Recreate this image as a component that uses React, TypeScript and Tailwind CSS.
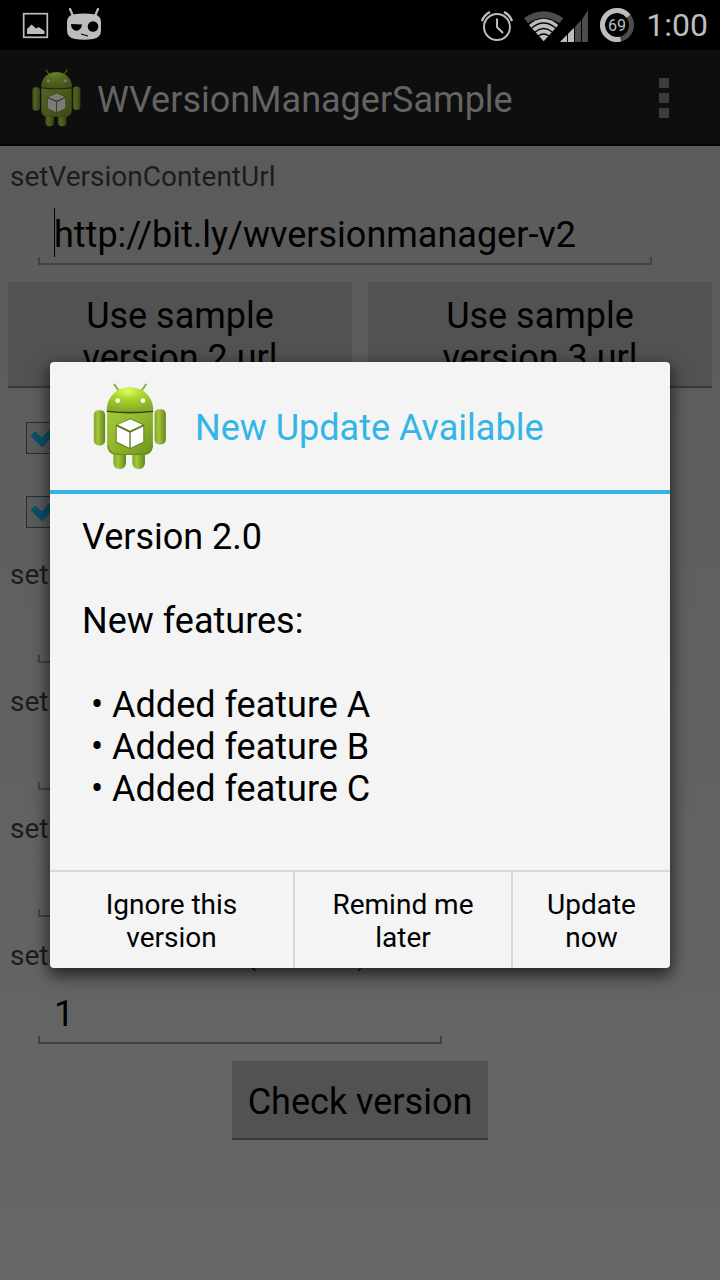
import type { ReactNode } from "react";

function Robot({ id, className }: { id: string; className: string }) {
  return (
    <svg viewBox="68 52 222 262" className={className} aria-hidden="true">
      <defs>
        <linearGradient id={`${id}-body`} x1="0" y1="0" x2="1" y2="1">
          <stop offset="0" stopColor="#a6c93a" />
          <stop offset="0.5" stopColor="#8fb52a" />
          <stop offset="1" stopColor="#6f9220" />
        </linearGradient>
        <linearGradient id={`${id}-limb`} x1="0" y1="0" x2="1" y2="0">
          <stop offset="0" stopColor="#7fa324" />
          <stop offset="0.35" stopColor="#a2c83a" />
          <stop offset="1" stopColor="#64851b" />
        </linearGradient>
        <radialGradient id={`${id}-head`} cx="0.45" cy="0.15" r="0.8">
          <stop offset="0" stopColor="#e0ff62" />
          <stop offset="0.4" stopColor="#a9d92c" />
          <stop offset="1" stopColor="#86ab28" />
        </radialGradient>
      </defs>
      <path d="M132 57l14 19M227 57l-14 19" stroke="#8db32c" strokeWidth="6" strokeLinecap="round" />
      <rect x="129" y="245" width="38" height="66" rx="17" fill={`url(#${id}-limb)`} />
      <rect x="186" y="245" width="38" height="66" rx="17" fill={`url(#${id}-limb)`} />
      <rect x="70" y="134" width="34" height="106" rx="14" fill={`url(#${id}-limb)`} />
      <rect x="253" y="131" width="34" height="106" rx="14" fill={`url(#${id}-limb)`} />
      <path d="M110 138h138v99q0 32-32 32h-74q-32 0-32-32z" fill={`url(#${id}-body)`} />
      <path d="M112 240q5 27 32 27h70q28 0 33-27" fill="none" stroke="#648418" strokeWidth="4" opacity="0.7" />
      <path d="M109 135C109 93 140 65 179 65s70 28 70 70q-70 8-140 0z" fill={`url(#${id}-head)`} />
      <path d="M109 137q70 8 140 0" fill="none" stroke="#374b0c" strokeWidth="5" />
      <circle cx="142" cy="105" r="7" fill="#fff" />
      <circle cx="218" cy="105" r="7" fill="#fff" />
      <path d="M180 158l42 20v52l-43 21-43-20v-52z" fill="#5c7a1b" />
      <path d="M180 161l37 17-38 18-37-18z" fill="#fff" />
      <path d="M139 183l38 18v46l-38-18z" fill="#fff" />
      <path d="M219 183l-38 18v46l38-18z" fill="#fff" />
    </svg>
  );
}

function StatusBar() {
  return (
    <header className="flex h-[50px] items-center justify-between bg-black pl-[22px] pr-3 text-[#bdbdbd]">
      <div className="flex items-center gap-[17px]">
        <svg viewBox="0 0 27 27" className="size-[27px]" aria-hidden="true">
          <rect x="1.7" y="1.7" width="23.6" height="23.6" fill="none" stroke="currentColor" strokeWidth="1.7" />
          <path d="M5 22V17l4.500-4.500 4.500 4 2.500-1.500 1.500 1 4.500 3V22z" fill="currentColor" />
        </svg>
        <svg viewBox="0 0 36 34" className="h-[34px] w-9" aria-hidden="true">
          <path d="M4 1l3 7M32 1l-3 7" stroke="currentColor" strokeWidth="2.200" strokeLinecap="round" />
          <path d="M7 6.500Q18 4.500 29 6.500 35 8 35 14v8q0 8-8 9-9 1.500-18 0-8-1-8-9v-8q0-6 6-7.500z" fill="currentColor" />
          <path d="M5 16l11 .5a5.500 6.500 0 01-11-.5z" fill="#000" />
          <circle cx="27" cy="18.500" r="5.300" fill="#000" />
          <path d="M15 26l7 2" stroke="#000" strokeWidth="1.300" />
        </svg>
      </div>
      <div className="flex items-center">
        <svg viewBox="0 0 34 32" className="h-8 w-[34px]" aria-hidden="true" fill="none" stroke="currentColor">
          <circle cx="17" cy="18" r="13" strokeWidth="2" />
          <path d="M17 9.500V18l6 6" strokeWidth="2" />
          <path d="M2 12Q4 6 10 3M32 12Q30 6 24 3" strokeWidth="2.500" />
        </svg>
        <svg viewBox="9 9 192 99" className="ml-[10px] h-[33px] w-16" aria-hidden="true">
          <path d="M9 36Q67-4 127 36L115 52Q67 20 21 52z" fill="#4c4c4c" />
          <path d="M24 57Q67 20 112 57L68 106z" fill="currentColor" />
          <g fill="none" stroke="#000" strokeWidth="4">
            <path d="M32 66Q68 36 104 66M42 78Q68 57 94 78M52 90Q68 78 84 90" />
          </g>
          <path d="M117 108L138 86v22zM141 83l18-18v43h-18z" fill="currentColor" />
          <path d="M162 62l18-19v65h-18zM183 40l18-27v95h-18z" fill="#4c4c4c" />
        </svg>
        <svg viewBox="0 0 34 34" className="ml-3 size-[34px]" aria-hidden="true">
          <circle cx="17" cy="17" r="14.500" fill="none" stroke="#4c4c4c" strokeWidth="5" />
          <path d="M28.500 8.200A14.500 14.500 0 1020.500 31.100" fill="none" stroke="currentColor" strokeWidth="5" />
          <text x="17" y="22.500" textAnchor="middle" fontSize="16" fontFamily="Roboto, sans-serif" fill="currentColor">69</text>
        </svg>
        <time className="ml-3 text-[32px] leading-[38px]">1:00</time>
      </div>
    </header>
  );
}

function Field({ label, value, width, cursor }: { label: string; value?: string; width: string; cursor?: boolean }) {
  return (
    <label className="block">
      <span className="block pl-[10px] text-[28px] leading-[33px] text-[#1c1c1c]">{label}</span>
      <span className={`relative ml-[38px] block max-w-full ${width}`}>
        <input
          type="text"
          defaultValue={value}
          className="block h-[72px] w-full bg-transparent px-4 pt-[21px] pb-[9px] text-[36px] leading-[42px] text-black outline-none"
        />
        <span className="-mt-2 block h-2 border-x-2 border-b-2 border-[#434343]" />
        {cursor && <span className="absolute top-[15px] left-4 h-[49px] w-px bg-black" />}
      </span>
    </label>
  );
}

function Tick({ label }: { label: string }) {
  return (
    <div className="flex h-[74px] items-center pl-[26px]">
      <span className="relative block size-8">
        <input type="checkbox" defaultChecked aria-label={label} className="block size-8 appearance-none border border-[#2c2c2c] bg-[#585c5e]" />
        <svg viewBox="0 0 32 32" className="pointer-events-none absolute inset-0 size-8" aria-hidden="true">
          <path d="M5 14l4-4 7 6L27 4l4 4-15 17z" fill="#07526f" stroke="#244654" strokeWidth="1" />
        </svg>
      </span>
    </div>
  );
}

function GreyButton({ children, className }: { children: ReactNode; className: string }) {
  return (
    <button
      type="button"
      className={`rounded-[2px] border-b-2 border-[#393939] bg-[#525252] text-[36px] leading-[42px] text-black shadow-[0_0_1px_#00000030] ${className}`}
    >
      {children}
    </button>
  );
}

function UpdateDialog() {
  return (
    <div className="absolute inset-0 flex items-center justify-center px-[50px] pt-[50px]">
      <section
        role="dialog"
        aria-labelledby="dialog-title"
        className="w-full max-w-[620px] overflow-hidden rounded-[4px] bg-[#f4f4f4] text-black shadow-[0_6px_16px_2px_#000000a0]"
      >
        <div className="box-content flex h-32 items-center border-b-4 border-[#33b5e5] pl-[43px]">
          <Robot id="dialog" className="h-[87px] w-[74px]" />
          <h2 id="dialog-title" className="pt-1 pl-7 text-[36px] leading-[42px] text-[#33b5e5]">New Update Available</h2>
        </div>
        <div className="px-8 pt-[22px] pb-[60px] text-[36px] leading-[42px]">
          <p>Version 2.0</p>
          <p className="mt-[42px]">New features:</p>
          <ul className="mt-[42px] pl-[9px]">
            <li>• Added feature A</li>
            <li>• Added feature B</li>
            <li>• Added feature C</li>
          </ul>
        </div>
        <div className="flex h-[98px] border-t-2 border-[#d8d8d8] text-[28px] leading-[33px]">
          <button type="button" className="flex-[243] border-r-2 border-[#d8d8d8] pt-[2px]">Ignore this<br />version</button>
          <button type="button" className="flex-[216] border-r-2 border-[#d8d8d8] pt-[2px]">Remind me<br />later</button>
          <button type="button" className="flex-[157] pt-[2px]">Update<br />now</button>
        </div>
      </section>
    </div>
  );
}

export default function App() {
  return (
    <div className="relative min-h-screen bg-[#606060] font-[Roboto,sans-serif]">
      <StatusBar />
      <div className="flex h-24 items-center border-b-2 border-[#060606] bg-[#0e0e0e] pt-[2px] pl-8 pr-[51px]">
        <Robot id="bar" className="h-[58px] w-[49px] opacity-45" />
        <h1 className="flex-1 pt-1 pl-4 text-[36px] leading-[42px] text-[#646464]">WVersionManagerSample</h1>
        <button type="button" aria-label="More options" className="flex flex-col gap-[5px]">
          <span className="size-[10px] bg-[#3c3c3c]" />
          <span className="size-[10px] bg-[#3c3c3c]" />
          <span className="size-[10px] bg-[#3c3c3c]" />
        </button>
      </div>
      <main className="min-h-[1134px] bg-linear-to-b from-[#5b5b5b] to-[#676767] pt-[14px]">
        <Field label="setVersionContentUrl" value="http://bit.ly/wversionmanager-v2" width="w-[614px]" cursor />
        <div className="mt-[17px] grid grid-cols-2 gap-4 px-2">
          <GreyButton className="pt-[13px] pb-[7px]">Use sample<br />version 2 url</GreyButton>
          <GreyButton className="pt-[13px] pb-[7px]">Use sample<br />version 3 url</GreyButton>
        </div>
        <div className="mt-[13px] mb-[9px]">
          <Tick label="First option" />
          <Tick label="Second option" />
        </div>
        <div className="flex flex-col gap-[22px]">
          <Field label="setUpdateNowLabel" width="w-[404px]" />
          <Field label="setRemindMeLabel" width="w-[404px]" />
          <Field label="setIgnoreLabel" width="w-[404px]" />
          <Field label="setReminderTimer (minutes)" value="1" width="w-[404px]" />
        </div>
        <div className="mt-[17px] flex justify-center">
          <GreyButton className="h-[79px] px-4 pt-1">Check version</GreyButton>
        </div>
      </main>
      <UpdateDialog />
    </div>
  );
}
